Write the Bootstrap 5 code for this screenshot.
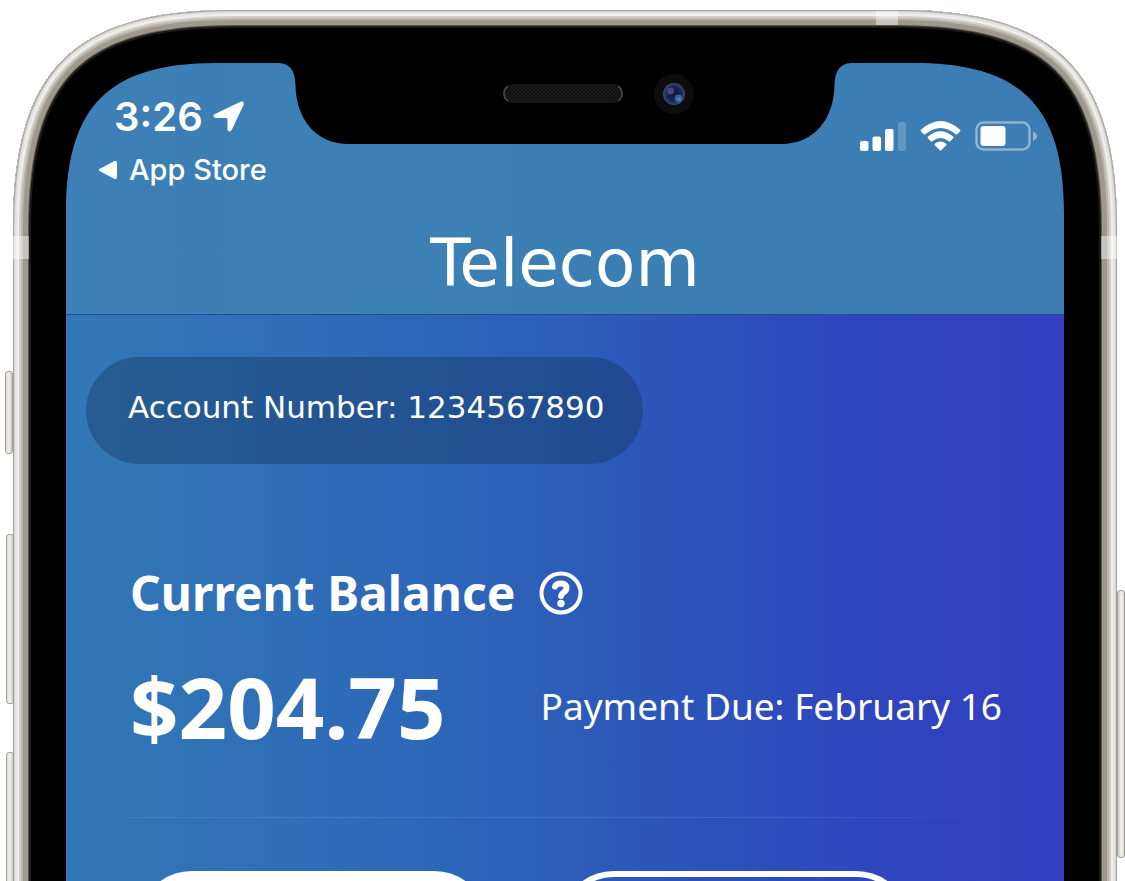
<!DOCTYPE html>
<html lang="en">
<head>
<meta charset="utf-8">
<meta name="viewport" content="width=device-width, initial-scale=1">
<title>Telecom</title>
<link href="https://cdn.jsdelivr.net/npm/bootstrap@5.3.0/dist/css/bootstrap.min.css" rel="stylesheet">
<style>
  body { background: #fff; color: #fff; font-family: "Noto Sans", "Open Sans", sans-serif; }
  .stage { padding: 10px 8px 0 13px; }
  /* metal rim drawn as rings, then the black glass edge */
  .phone {
    background: #000;
    padding: 53px 53px 0;
    box-shadow: inset 0 0 0 1px #a9a59e, inset 0 0 0 2px #d3d1cc, inset 0 0 0 4px #e6e5e2,
      inset 0 0 0 6px #f0efed, inset 0 0 0 8px #d2cfca, inset 0 0 0 10px #b9b5ad,
      inset 0 0 0 15px #9f988d, inset 0 0 0 16px #5c5852, inset 0 0 0 18px #1c1b1a;
  }
  .defs { width: 0; height: 0; }
  .corner { top: 0; width: 230px; height: 230px; z-index: 3; }
  .corner-left { left: 0; }
  .corner-right { right: 0; transform: scaleX(-1); }
  .side-key {
    width: 8px; z-index: 2; border: 1px solid #a39f98; border-radius: 3px;
    background: linear-gradient(90deg, #dcdad6, #f4f3f1 50%, #c9c5bf);
  }
  .key-mute { left: -8px; top: 361px; height: 83px; }
  .key-up { left: -7px; top: 524px; height: 170px; }
  .key-down { left: -7px; top: 742px; height: 170px; }
  .key-power { right: -8px; top: 580px; height: 268px; transform: scaleX(-1); }
  .antenna { background: rgba(255,255,255,.42); z-index: 4; }
  .antenna-left, .antenna-right { top: 226px; width: 16px; height: 23px; }
  .antenna-left { left: 0; }
  .antenna-right { right: 0; }
  .antenna-top { top: 1px; right: 219px; width: 22px; height: 14px; }
  .display {
    background: linear-gradient(90deg, #3378b6 0%, #2f6fb7 20%, #2d66b8 38%, #2c57b9 58%, #2e46bd 80%, #333ec1 100%);
  }
  .notch { top: 0; left: 50%; margin-left: -286px; width: 572px; height: 82px; z-index: 2; }
  .app-header {
    height: 252px; border-bottom: 1px solid #234a92;
    background: linear-gradient(90deg, #3d7fb6, #3c80b3 50%, #3c7cb3);
  }
  .status-bar { padding: 30px 27px 0 32px; font-family: Inter, sans-serif; }
  .clock { font-size: 40px; line-height: 48px; font-weight: 600; padding-left: 16px; gap: 10px; }
  .back-link { font-size: 29px; line-height: 36px; font-weight: 500; gap: 12px; margin-top: 11px; }
  .indicators { padding-top: 28px; gap: 14px; }
  .app-title { font-family: "DejaVu Sans", sans-serif; font-size: 66px; line-height: 80px; margin-top: 36px; font-weight: 400; }
  .account-pill {
    margin: 42px 0 0 20px; padding: 30px 38px 36px 42px; border-radius: 54px;
    background: rgba(18,50,85,.38);
    font-family: "DejaVu Sans", sans-serif; font-size: 31px; line-height: 41px;
  }
  .balance { padding: 96px 62px 0 64px; }
  .balance-title { font-size: 48px; line-height: 66px; font-weight: 700; }
  .help-btn { margin-left: 23px; line-height: 0; }
  .amount-row { margin-top: 21px; }
  .amount { font-size: 85px; line-height: 118px; font-weight: 700; }
  .due { font-size: 37px; line-height: 50px; font-weight: 400; }
  .rule { margin: 52px 22px 0 0; height: 1px; background: linear-gradient(90deg, #3f82c4, #3b69c4 70%, #3246c2); }
  .actions { gap: 72px; margin-top: 53px; padding: 0 154px 0 72px; }
  .pill-btn { height: 108px; border-radius: 54px; border: 6px solid #fff; }
</style>
</head>
<body class="vh-100 overflow-hidden">
<div class="stage h-100 overflow-hidden">
  <div class="phone position-relative">
    <svg class="defs position-absolute" aria-hidden="true">
      <defs>
        <clipPath id="body-clip"><path d="M0 230V220C0 60 60 0 220 0H230V230Z"/></clipPath>
        <symbol id="bend" viewBox="0 0 230 230">
          <path fill="#fff" d="M0 0H220C60 0 0 60 0 220Z"/>
          <path fill="#fff" d="M0 0H230V12H0ZM0 0V230H12V0Z"/>
          <path fill="#000" d="M0 230V220C0 60 60 0 220 0H230V53H203C96 53 53 96 53 203V230Z"/>
          <g clip-path="url(#body-clip)" fill="none">
            <path d="M0 240V220C0 60 60 0 220 0H240" stroke="#1c1b1a" stroke-width="36"/>
            <path d="M0 240V220C0 60 60 0 220 0H240" stroke="#5c5852" stroke-width="32"/>
            <path d="M0 240V220C0 60 60 0 220 0H240" stroke="#9f988d" stroke-width="30"/>
            <path d="M0 240V220C0 60 60 0 220 0H240" stroke="#b9b5ad" stroke-width="20"/>
            <path d="M0 240V220C0 60 60 0 220 0H240" stroke="#d2cfca" stroke-width="16"/>
            <path d="M0 240V220C0 60 60 0 220 0H240" stroke="#f0efed" stroke-width="12"/>
            <path d="M0 240V220C0 60 60 0 220 0H240" stroke="#e6e5e2" stroke-width="8"/>
            <path d="M0 240V220C0 60 60 0 220 0H240" stroke="#d3d1cc" stroke-width="4"/>
            <path d="M0 240V220C0 60 60 0 220 0H240" stroke="#a9a59e" stroke-width="2"/>
          </g>
        </symbol>
      </defs>
    </svg>
    <svg class="corner corner-left position-absolute" aria-hidden="true"><use href="#bend"/></svg>
    <svg class="corner corner-right position-absolute" aria-hidden="true"><use href="#bend"/></svg>
    <div class="side-key key-mute position-absolute"></div>
    <div class="side-key key-up position-absolute"></div>
    <div class="side-key key-down position-absolute"></div>
    <div class="side-key key-power position-absolute"></div>
    <div class="antenna antenna-left position-absolute"></div>
    <div class="antenna antenna-right position-absolute"></div>
    <div class="antenna antenna-top position-absolute"></div>

    <main class="display position-relative">
      <svg class="notch position-absolute" viewBox="0 0 572 82" aria-hidden="true">
        <defs>
          <pattern id="mesh" width="4" height="4" patternUnits="userSpaceOnUse">
            <rect width="4" height="4" fill="#111010"/><rect width="2" height="2" fill="#1d1b1b"/><rect x="2" y="2" width="2" height="2" fill="#1b1919"/>
          </pattern>
          <radialGradient id="lens" cx=".5" cy=".5" r=".5">
            <stop offset="0" stop-color="#111638"/><stop offset=".65" stop-color="#18264e"/><stop offset="1" stop-color="#304d75"/>
          </radialGradient>
        </defs>
        <path d="M0 -1V0C11 1 16 7 16.500 22C17 55 36 81 70 81H502C536 81 555 55 555.500 22C556 7 561 1 572 0V-1Z" fill="#000"/>
        <rect x="224.500" y="21.500" width="119" height="18" rx="9" fill="url(#mesh)" stroke="#151515"/>
        <path d="M229 23A9 9 0 0 0 229 38M339 23A9 9 0 0 1 339 38" fill="none" stroke="#4b4b4b" stroke-width="1.500"/>
        <circle cx="395" cy="31" r="20" fill="#0d0d0d"/>
        <circle cx="395" cy="31" r="11" fill="url(#lens)"/>
        <circle cx="391.500" cy="28" r="3.500" fill="#4e4188"/>
        <circle cx="399.500" cy="35.500" r="4" fill="#345f94"/>
        <circle cx="400" cy="36" r="2" fill="#4c7eb0"/>
      </svg>

      <header class="app-header">
        <div class="status-bar d-flex justify-content-between align-items-start">
          <div>
            <div class="clock d-flex align-items-center">
              <span>3:26</span>
              <svg width="32" height="32" viewBox="0 0 32 32" aria-hidden="true"><path d="M2 13L27.500 .8Q31.800 -.5 30.500 4L19 28.500Q16.500 32 14.500 29V18.500Q14.500 17 13 17H2.500Q-1.500 15.500 2 13Z" fill="#fff"/></svg>
            </div>
            <a href="#" class="back-link d-flex align-items-center text-white text-decoration-none">
              <svg width="19" height="20" viewBox="0 0 19 20" aria-hidden="true"><path d="M1.500 9L16.500 1Q19 .3 19 3V17Q19 19.700 16.500 19L1.500 11Q0 10 1.500 9Z" fill="#fff"/></svg>
              <span>App Store</span>
            </a>
          </div>
          <div class="indicators d-flex align-items-center">
            <svg width="46" height="30" viewBox="0 0 46 30" role="img" aria-label="Signal">
              <g fill="#fff"><rect y="20" width="8.500" height="10" rx="2"/><rect x="12.500" y="15.500" width="8.500" height="14.500" rx="2"/><rect x="25" y="8" width="8.500" height="22" rx="2"/><rect x="38" y="1" width="8" height="29" rx="2" opacity=".2"/></g>
            </svg>
            <svg width="41" height="30" viewBox="0 0 41 30" role="img" aria-label="Wi-Fi">
              <g fill="#fff"><path d="M1.200 8.500Q20.500 -8.500 39.800 8.500Q41 9.500 40 10.500L37.500 13Q36.500 14 35.500 13Q20.500 1 5.500 13Q4.500 14 3.500 13L1 10.500Q0 9.500 1.200 8.500Z"/><path d="M8 15.500Q20.500 5 33 15.500Q34 16.500 33 17.500L30.500 20Q29.500 21 28.500 20Q20.500 14 12.500 20Q11.500 21 10.500 20L8 17.500Q7 16.500 8 15.500Z"/><path d="M15 22.500Q20.500 18.500 26 22.500Q27 23.500 26 24.500L21.500 29Q20.500 30 19.500 29L15 24.500Q14 23.500 15 22.500Z"/></g>
            </svg>
            <svg width="62" height="30" viewBox="0 0 62 30" role="img" aria-label="Battery">
              <rect x="1.500" y="1.500" width="53" height="27" rx="7" fill="none" stroke="#8db4d3" stroke-width="2.500"/>
              <rect x="5.500" y="5" width="25" height="20" rx="3" fill="#fff"/>
              <path d="M58 10.500Q62 12 62 15.300Q62 18.500 58 20Z" fill="#8db4d3"/>
            </svg>
          </div>
        </div>
        <h1 class="app-title text-center mb-0">Telecom</h1>
      </header>

      <div class="account-pill d-inline-block text-nowrap">Account Number: 1234567890</div>

      <section class="balance">
        <div class="d-flex align-items-center">
          <h2 class="balance-title mb-0 text-nowrap">Current Balance</h2>
          <button type="button" class="help-btn btn p-0 border-0" aria-label="About the balance">
            <svg width="44" height="44" viewBox="0 0 44 44" aria-hidden="true">
              <circle cx="22" cy="22" r="19.500" fill="none" stroke="#fff" stroke-width="4"/>
              <path d="M16 15.500Q17.500 12.500 21.500 12.500Q27.500 12.500 27.500 17Q27.500 19.500 24.500 21.500Q22 23.500 22 25" fill="none" stroke="#fff" stroke-width="6" stroke-linecap="round" stroke-linejoin="round"/>
              <circle cx="22" cy="32.500" r="3.700" fill="#fff"/>
            </svg>
          </button>
        </div>
        <div class="amount-row d-flex justify-content-between align-items-center">
          <div class="amount">$204.75</div>
          <div class="due text-nowrap">Payment Due: February 16</div>
        </div>
        <div class="rule"></div>
      </section>
      <div class="actions d-flex">
        <button type="button" class="pill-btn bg-white flex-fill" aria-label="Pay now"></button>
        <button type="button" class="pill-btn bg-transparent flex-fill" aria-label="View bill"></button>
      </div>
    </main>
  </div>
</div>
<script src="https://cdn.jsdelivr.net/npm/bootstrap@5.3.0/dist/js/bootstrap.bundle.min.js"></script>
</body>
</html>
